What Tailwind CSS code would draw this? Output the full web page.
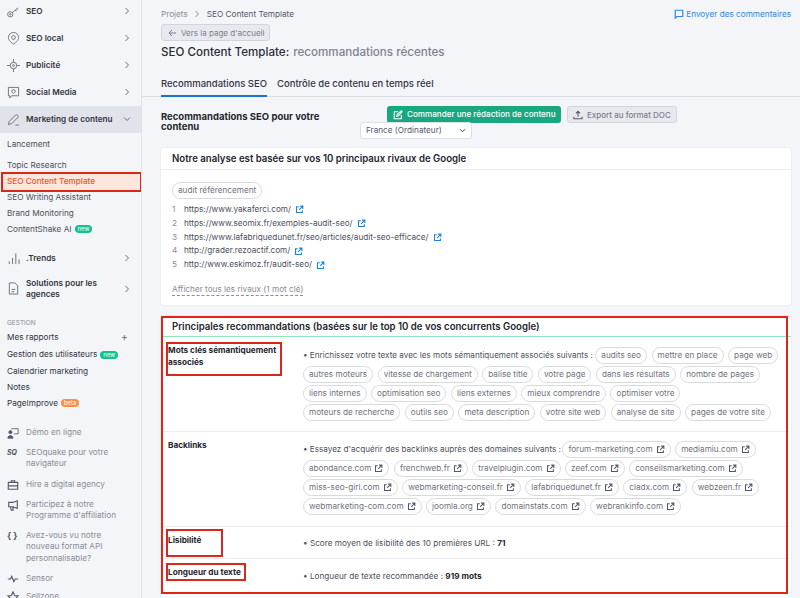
<!DOCTYPE html>
<html lang="fr"><head><meta charset="utf-8"><script src="https://cdn.jsdelivr.net/npm/@tailwindcss/browser@4"></script></head>
<body class="w-[800px] h-[598px] overflow-hidden bg-[#f4f5f9] font-['Inter',sans-serif] text-[#2b2e38]">
<svg class="hidden"><defs>
<symbol id="ext" viewBox="0 0 12 12"><path d="M5 2.200H2v7.800h7.800V7M6.800 1.500h3.700v3.700M10.200 1.800 5.500 6.500" fill="none" stroke="currentColor" stroke-width="1.400"/></symbol>
<symbol id="chev" viewBox="0 0 8 8"><path d="M2.500 1 5.500 4 2.500 7" fill="none" stroke="currentColor" stroke-width="1"/></symbol>
</defs></svg>
<div class="flex h-[598px] w-[800px] overflow-hidden">
<aside class="relative w-[142px] h-[598px] shrink-0 border-r border-[#e0e1e9] overflow-hidden flex flex-col">
 <nav class="-mt-[2.500px] flex flex-col text-[8.200px] font-semibold text-[#333642]">
  <div class="h-[27px] flex items-center pl-[7px] pr-[10px] gap-[6px]"><svg class="w-[13px] h-[13px] shrink-0 text-[#6c6e79]" viewBox="0 0 14 14" fill="none" stroke="currentColor"><circle cx="3.500" cy="10" r="2.800"/><circle cx="3.500" cy="10" r=".8"/><path d="M6 8 12 3M9 5.500l1.500 1.500M11 4l1 1"/></svg><span class="flex-1">SEO</span><svg class="w-[8px] h-[8px] text-[#6c6e79]"><use href="#chev"/></svg></div>
  <div class="h-[27px] flex items-center pl-[7px] pr-[10px] gap-[6px]"><svg class="w-[13px] h-[13px] shrink-0 text-[#6c6e79]" viewBox="0 0 14 14" fill="none" stroke="currentColor"><path d="M7 13C3 10.500 1.500 8 1.500 6a5.500 5.500 0 0 1 11 0c0 2-1.500 4.500-5.500 7Z"/><circle cx="7" cy="6" r="2"/></svg><span class="flex-1">SEO local</span><svg class="w-[8px] h-[8px] text-[#6c6e79]"><use href="#chev"/></svg></div>
  <div class="h-[27px] flex items-center pl-[7px] pr-[10px] gap-[6px]"><svg class="w-[13px] h-[13px] shrink-0 text-[#6c6e79]" viewBox="0 0 14 14" fill="none" stroke="currentColor"><circle cx="7" cy="7" r="3.500"/><circle cx="7" cy="7" r="1"/><path d="M7 0v3.500M7 10.500V14M0 7h3.500M10.500 7H14"/></svg><span class="flex-1">Publicité</span><svg class="w-[8px] h-[8px] text-[#6c6e79]"><use href="#chev"/></svg></div>
  <div class="h-[27px] flex items-center pl-[7px] pr-[10px] gap-[6px]"><svg class="w-[13px] h-[13px] shrink-0 text-[#6c6e79]" viewBox="0 0 14 14" fill="none" stroke="currentColor"><path d="M1.500 1.500h11v9H5L3 13v-2.500H1.500Z"/><path d="M5 5.500c0-2 4-2 4 0 0 1.500-2 2.500-2 2.500S5 7 5 5.500Z"/></svg><span class="flex-1">Social Media</span><svg class="w-[8px] h-[8px] text-[#6c6e79]"><use href="#chev"/></svg></div>
  <div class="h-[27px] flex items-center pl-[7px] pr-[10px] gap-[6px] bg-[#e1e3eb]"><svg class="w-[13px] h-[13px] shrink-0 text-[#6c6e79]" viewBox="0 0 14 14" fill="none" stroke="currentColor"><path d="M1.500 12.500 2.500 9 9.500 2c1-1 3.500 1.500 2.500 2.500L5 11.500ZM9 13h4"/></svg><span class="flex-1 whitespace-nowrap">Marketing de contenu</span><svg class="w-[8px] h-[8px] shrink-0 text-[#6c6e79] rotate-90"><use href="#chev"/></svg></div>
 </nav>
 <div class="flex flex-col text-[8.200px] text-[#4d505c] pl-[7px] mt-[3px]">
  <div class="h-[16px] leading-[16px] mb-[5px]">Lancement</div>
  <div class="h-[16px] leading-[16px]">Topic Research</div>
  <div class="h-[16px] leading-[16px] text-[#f0532e] font-medium -ml-[7px] pl-[7px]">SEO Content Template</div>
  <div class="h-[16px] leading-[16px]">SEO Writing Assistant</div>
  <div class="h-[16px] leading-[16px]">Brand Monitoring</div>
  <div class="h-[17px] flex items-center gap-[3px]">ContentShake AI <span class="h-[8px] px-[3px] rounded-full bg-[#10c28e] text-white text-[6px] leading-[8px]">new</span></div>
 </div>
 <div class="h-px bg-[#e0e1e9] mt-[7px]"></div>
 <div class="flex flex-col text-[8.200px] font-semibold text-[#333642]">
  <div class="h-[27px] flex items-center pl-[7px] pr-[10px] gap-[6px]"><svg class="w-[13px] h-[13px] shrink-0 text-[#6c6e79]" viewBox="0 0 14 14" fill="none" stroke="currentColor"><path d="M2.500 13v-3M6 13V6.500M9.500 13V1.500M13 13V8"/></svg><span class="flex-1">.Trends</span><svg class="w-[8px] h-[8px] text-[#6c6e79]"><use href="#chev"/></svg></div>
  <div class="h-[34px] flex items-center pl-[7px] pr-[10px] gap-[6px] leading-[11px]"><svg class="w-[13px] h-[13px] text-[#6c6e79] shrink-0" viewBox="0 0 14 14" fill="none" stroke="currentColor"><path d="M2.500 1h6l3 3v9h-9ZM5 8h4M5 10.500h3"/></svg><span class="flex-1">Solutions pour les<br>agences</span><svg class="w-[8px] h-[8px] text-[#6c6e79] shrink-0"><use href="#chev"/></svg></div>
 </div>
 <div class="h-px bg-[#e0e1e9]"></div>
 <div class="pl-[7px] pr-[13px] flex flex-col text-[8.200px] text-[#333642]">
  <div class="text-[6.500px] text-[#8a8c97] mt-[13px] h-[9px] leading-[9px] mb-[1px]">GESTION</div>
  <div class="h-[18px] flex items-center justify-between">Mes rapports<span class="text-[11px] text-[#6c6e79]">+</span></div>
  <div class="h-[16px] flex items-center gap-[3px] whitespace-nowrap">Gestion des utilisateurs <span class="h-[8px] px-[3px] rounded-full bg-[#10c28e] text-white text-[6px] leading-[8px]">new</span></div>
  <div class="h-[16px] leading-[16px]">Calendrier marketing</div>
  <div class="h-[16px] leading-[16px]">Notes</div>
  <div class="h-[17px] flex items-center gap-[3px]">PageImprove <span class="h-[8px] px-[3px] rounded-full bg-[#ff8c43] text-white text-[6px] leading-[8px]">beta</span></div>
 </div>
 <div class="h-px bg-[#e0e1e9] mt-[5px]"></div>
 <div class="flex flex-col text-[8.200px] text-[#8a8c97] leading-[11.500px] pl-[7px] pr-[8px] mt-[10px]">
  <div class="flex gap-[7px] min-h-[20px]"><svg class="w-[12px] h-[12px] text-[#55586a] shrink-0" viewBox="0 0 14 14" fill="none" stroke="currentColor"><path d="M5 2h8v6H8"/><circle cx="4" cy="6" r="1.800" fill="currentColor"/><path d="M1 13c0-4 6-4 6 0Z" fill="currentColor"/></svg><span>Démo en ligne</span></div>
  <div class="flex gap-[7px] min-h-[32px]"><span class="w-[12px] shrink-0 text-[7px] font-bold italic text-[#55586a]">SQ</span><span>SEOquake pour votre<br>navigateur</span></div>
  <div class="flex gap-[7px] min-h-[20px]"><svg class="w-[12px] h-[12px] text-[#55586a] shrink-0" viewBox="0 0 14 14" fill="none" stroke="currentColor" stroke-width="1.300"><path d="M1.500 4h11v8h-11ZM5 4V2h4v2M1.500 8h11"/></svg><span>Hire a digital agency</span></div>
  <div class="flex gap-[7px] min-h-[31px]"><svg class="w-[12px] h-[12px] text-[#55586a] shrink-0" viewBox="0 0 14 14" fill="none" stroke="currentColor" stroke-width="1.300"><path d="M2 4h5l5-2v9L7 9H2ZM4 9l1 4h2V9"/></svg><span class="whitespace-nowrap">Participez à notre<br>Programme d'affiliation</span></div>
  <div class="flex gap-[7px] min-h-[43px]"><span class="w-[12px] shrink-0 text-[9px] font-bold text-[#55586a] whitespace-nowrap">{ }</span><span>Avez-vous vu notre<br>nouveau format API<br>personnalisable?</span></div>
  <div class="flex gap-[7px] min-h-[18px]"><svg class="w-[12px] h-[12px] text-[#55586a] shrink-0" viewBox="0 0 14 14" fill="none" stroke="currentColor" stroke-width="1.300"><path d="M1 7h3l1.500-3 2.500 6 1.500-3H13"/></svg><span>Sensor</span></div>
  <div class="flex gap-[7px]"><svg class="w-[12px] h-[12px] text-[#55586a] shrink-0" viewBox="0 0 14 14" fill="none" stroke="currentColor" stroke-width="1.300"><path d="M7 1 9 5.500h4L10 9l1 4-4-2-4 2 1-4-3-3.500h4Z"/></svg><span>Sellzone</span></div>
 </div>
 <div class="absolute left-[1px] top-[172px] w-[141px] h-[20px] border-2 border-[#d8281e] bg-[#fde6dc] -z-10"></div>
</aside>
<main class="flex-1 min-w-0 relative">
 <div class="pl-[19px] pr-[9px]">
  <div class="flex items-center justify-between h-[28px]">
   <div class="flex items-center text-[8.200px] text-[#8a8c97]">Projets<svg class="w-[8px] h-[8px] mx-[5.500px] text-[#8a8c97]"><use href="#chev"/></svg><span class="text-[#55586a]">SEO Content Template</span></div>
   <div class="flex items-center gap-[2px] text-[8.200px] text-[#2e86de]"><svg class="w-[10px] h-[10px]" viewBox="0 0 12 12" fill="none" stroke="currentColor" stroke-width="1.400"><path d="M1.500 1.500h9v7.500H3.500L1.500 11Z"/></svg>Envoyer des commentaires</div>
  </div>
  <div class="-mt-[4px] h-[17px] w-[109px] flex items-center gap-[5px] px-[6px] whitespace-nowrap rounded-[3px] border border-[#d3d5de] bg-[#e8e9ef] text-[8px] text-[#7b7d89]"><svg class="w-[8px] h-[8px] shrink-0" viewBox="0 0 8 8" fill="none" stroke="currentColor"><path d="M8 4H1M4 1 1 4l3 3"/></svg>Vers la page d'accueil</div>
  <div class="mt-[1px] text-[11.600px] leading-[20px] font-medium"><span class="text-[#2b2e38]">SEO Content Template:</span> <span class="text-[#80828e] ml-[1px]">recommandations récentes</span></div>
 </div>
 <div class="mt-[10px] h-[25px] border-b border-[#dcdee6] pl-[19px] flex gap-[10px] text-[9.500px] font-medium text-[#333642]">
  <div class="h-[25px] leading-[24px] border-b-2 border-[#1c6fd0] -mb-px">Recommandations SEO</div>
  <div class="leading-[24px]">Contrôle de contenu en temps réel</div>
 </div>
 <div class="h-[51px] relative pl-[19px]">
  <div class="pt-[15px] w-[180px] text-[9.500px] leading-[10px] font-bold text-[#24262e]">Recommandations SEO pour votre contenu</div>
  <div class="absolute left-[245px] top-[9px] flex items-center gap-[6px]">
   <div class="h-[17px] w-[174px] px-[6px] flex items-center gap-[4px] rounded-[3px] bg-[#18a77f] text-white text-[8.100px] font-medium whitespace-nowrap"><svg class="w-[10px] h-[10px] shrink-0" viewBox="0 0 12 12" fill="none" stroke="currentColor" stroke-width="1.300"><path d="M6 2H1.500v8.500H10V6M4.500 7.500l.5-2L10 1l1 1-4.500 5Z"/></svg>Commander une rédaction de contenu</div>
   <div class="h-[17px] w-[110px] px-[5px] flex items-center gap-[4px] rounded-[3px] border border-[#d3d5de] bg-[#e8e9ef] text-[#7b7d89] text-[8px] font-medium whitespace-nowrap"><svg class="w-[10px] h-[10px] shrink-0 text-[#55586a]" viewBox="0 0 12 12" fill="none" stroke="currentColor" stroke-width="1.300"><path d="M6 8V1.500M3.500 4 6 1.500 8.500 4M1 8v2.500h10V8"/></svg>Export au format DOC</div>
  </div>
  <div class="absolute left-[218px] top-[25px] w-[112px] h-[17px] px-[5px] flex items-center justify-between rounded-[3px] border border-[#dcdee6] bg-white text-[8.200px] text-[#55586a]">France (Ordinateur)<svg class="w-[7px] h-[7px] text-[#24262e] rotate-90"><use href="#chev"/></svg></div>
 </div>
 <section class="ml-[19px] w-[630px] h-[157px] rounded-[3px] bg-white shadow-[0_0_2px_rgba(30,35,60,.12)]">
  <div class="h-[22px] border-b border-[#ebecf1] pl-[11px] text-[9.650px] leading-[22px] font-semibold text-[#24262e]">Notre analyse est basée sur vos 10 principaux rivaux de Google</div>
  <div class="pl-[11px] pt-[12px]">
   <div class="w-fit h-[17px] px-[5px] rounded-full border border-[#d8dae2] text-[8.200px] leading-[15px] text-[#6f717d]">audit référencement</div>
   <div class="mt-[4px] h-[74px] overflow-hidden text-[8.200px] leading-[13.800px] text-[#4d505c]">
    <div class="flex items-center"><span class="w-[12px] text-[#8a8c97]">1</span>https://www.yakaferci.com/<svg class="w-[9px] h-[9px] ml-[4px] text-[#1c7ed6]"><use href="#ext"/></svg></div>
    <div class="flex items-center"><span class="w-[12px] text-[#8a8c97]">2</span>https://www.seomix.fr/exemples-audit-seo/<svg class="w-[9px] h-[9px] ml-[4px] text-[#1c7ed6]"><use href="#ext"/></svg></div>
    <div class="flex items-center"><span class="w-[12px] text-[#8a8c97]">3</span>https://www.lafabriquedunet.fr/seo/articles/audit-seo-efficace/<svg class="w-[9px] h-[9px] ml-[4px] text-[#1c7ed6]"><use href="#ext"/></svg></div>
    <div class="flex items-center"><span class="w-[12px] text-[#8a8c97]">4</span>http://grader.rezoactif.com/<svg class="w-[9px] h-[9px] ml-[4px] text-[#1c7ed6]"><use href="#ext"/></svg></div>
    <div class="flex items-center"><span class="w-[12px] text-[#8a8c97]">5</span>http://www.eskimoz.fr/audit-seo/<svg class="w-[9px] h-[9px] ml-[4px] text-[#1c7ed6]"><use href="#ext"/></svg></div>
   </div>
   <div class="w-fit mt-[7px] text-[8.200px] leading-[11px] text-[#8a8c97] border-b border-dashed border-[#8a8c97]">Afficher tous les rivaux (1 mot clé)</div>
  </div>
 </section>
 <section class="relative ml-[19px] mt-[11px] w-[630px] h-[282px] rounded-[3px] bg-white shadow-[0_0_2px_rgba(30,35,60,.12)] text-[8.200px] text-[#4d505c]">
  <div class="h-[21px] border-b border-[#8fe3bf] pl-[11px] text-[9.650px] leading-[21px] font-semibold text-[#24262e]">Principales recommandations (basées sur le top 10 de vos concurrents Google)</div>
  <div class="h-[95px] flex border-b border-[#ebecf1] mx-[2px]">
   <div class="w-[140px] pl-[5px] pt-[7px] font-bold text-[#24262e] leading-[12px]">Mots clés sémantiquement<br>associés</div>
   <div class="pt-[10px] flex flex-col gap-[2px] text-[#6f717d] whitespace-nowrap">
    <div class="flex items-center gap-[4.500px] h-[17px]"><span class="text-[#4d505c] text-[8.150px] -mr-[2px]">• Enrichissez votre texte avec les mots sémantiquement associés suivants :</span><span class="h-[17px] px-[5px] rounded-full border border-[#d8dae2] leading-[15px]">audits seo</span><span class="h-[17px] px-[5px] rounded-full border border-[#d8dae2] leading-[15px]">mettre en place</span><span class="h-[17px] px-[5px] rounded-full border border-[#d8dae2] leading-[15px]">page web</span></div>
    <div class="flex gap-[4.500px]"><span class="h-[17px] px-[5px] rounded-full border border-[#d8dae2] leading-[15px]">autres moteurs</span><span class="h-[17px] px-[5px] rounded-full border border-[#d8dae2] leading-[15px]">vitesse de chargement</span><span class="h-[17px] px-[5px] rounded-full border border-[#d8dae2] leading-[15px]">balise title</span><span class="h-[17px] px-[5px] rounded-full border border-[#d8dae2] leading-[15px]">votre page</span><span class="h-[17px] px-[5px] rounded-full border border-[#d8dae2] leading-[15px]">dans les résultats</span><span class="h-[17px] px-[5px] rounded-full border border-[#d8dae2] leading-[15px]">nombre de pages</span></div>
    <div class="flex gap-[4.500px]"><span class="h-[17px] px-[5px] rounded-full border border-[#d8dae2] leading-[15px]">liens internes</span><span class="h-[17px] px-[5px] rounded-full border border-[#d8dae2] leading-[15px]">optimisation seo</span><span class="h-[17px] px-[5px] rounded-full border border-[#d8dae2] leading-[15px]">liens externes</span><span class="h-[17px] px-[5px] rounded-full border border-[#d8dae2] leading-[15px]">mieux comprendre</span><span class="h-[17px] px-[5px] rounded-full border border-[#d8dae2] leading-[15px]">optimiser votre</span></div>
    <div class="flex gap-[4.500px]"><span class="h-[17px] px-[5px] rounded-full border border-[#d8dae2] leading-[15px]">moteurs de recherche</span><span class="h-[17px] px-[5px] rounded-full border border-[#d8dae2] leading-[15px]">outils seo</span><span class="h-[17px] px-[5px] rounded-full border border-[#d8dae2] leading-[15px]">meta description</span><span class="h-[17px] px-[5px] rounded-full border border-[#d8dae2] leading-[15px]">votre site web</span><span class="h-[17px] px-[5px] rounded-full border border-[#d8dae2] leading-[15px]">analyse de site</span><span class="h-[17px] px-[5px] rounded-full border border-[#d8dae2] leading-[15px]">pages de votre site</span></div>
   </div>
  </div>
  <div class="h-[95px] flex border-b border-[#ebecf1] mx-[2px]">
   <div class="w-[140px] pl-[5px] pt-[7px] font-bold text-[#24262e] leading-[12px]">Backlinks</div>
   <div class="pt-[9px] flex flex-col gap-[2px] text-[#6f717d] whitespace-nowrap">
    <div class="flex items-center gap-[4.500px] h-[17px]"><span class="text-[#4d505c] text-[8.150px] -mr-[3px]">• Essayez d'acquérir des backlinks auprès des domaines suivants :</span><span class="flex items-center gap-[3px] h-[17px] px-[5px] rounded-full border border-[#d8dae2]">forum-marketing.com<svg class="w-[9px] h-[9px] text-[#55586a]"><use href="#ext"/></svg></span><span class="flex items-center gap-[3px] h-[17px] px-[5px] rounded-full border border-[#d8dae2]">mediamiu.com<svg class="w-[9px] h-[9px] text-[#55586a]"><use href="#ext"/></svg></span></div>
    <div class="flex gap-[4.500px]"><span class="flex items-center gap-[3px] h-[17px] px-[5px] rounded-full border border-[#d8dae2]">abondance.com<svg class="w-[9px] h-[9px] text-[#55586a]"><use href="#ext"/></svg></span><span class="flex items-center gap-[3px] h-[17px] px-[5px] rounded-full border border-[#d8dae2]">frenchweb.fr<svg class="w-[9px] h-[9px] text-[#55586a]"><use href="#ext"/></svg></span><span class="flex items-center gap-[3px] h-[17px] px-[5px] rounded-full border border-[#d8dae2]">travelplugin.com<svg class="w-[9px] h-[9px] text-[#55586a]"><use href="#ext"/></svg></span><span class="flex items-center gap-[3px] h-[17px] px-[5px] rounded-full border border-[#d8dae2]">zeef.com<svg class="w-[9px] h-[9px] text-[#55586a]"><use href="#ext"/></svg></span><span class="flex items-center gap-[3px] h-[17px] px-[5px] rounded-full border border-[#d8dae2]">conseilsmarketing.com<svg class="w-[9px] h-[9px] text-[#55586a]"><use href="#ext"/></svg></span></div>
    <div class="flex gap-[4.500px]"><span class="flex items-center gap-[3px] h-[17px] px-[5px] rounded-full border border-[#d8dae2]">miss-seo-girl.com<svg class="w-[9px] h-[9px] text-[#55586a]"><use href="#ext"/></svg></span><span class="flex items-center gap-[3px] h-[17px] px-[5px] rounded-full border border-[#d8dae2]">webmarketing-conseil.fr<svg class="w-[9px] h-[9px] text-[#55586a]"><use href="#ext"/></svg></span><span class="flex items-center gap-[3px] h-[17px] px-[5px] rounded-full border border-[#d8dae2]">lafabriquedunet.fr<svg class="w-[9px] h-[9px] text-[#55586a]"><use href="#ext"/></svg></span><span class="flex items-center gap-[3px] h-[17px] px-[5px] rounded-full border border-[#d8dae2]">cladx.com<svg class="w-[9px] h-[9px] text-[#55586a]"><use href="#ext"/></svg></span><span class="flex items-center gap-[3px] h-[17px] px-[5px] rounded-full border border-[#d8dae2]">webzeen.fr<svg class="w-[9px] h-[9px] text-[#55586a]"><use href="#ext"/></svg></span></div>
    <div class="flex gap-[4.500px]"><span class="flex items-center gap-[3px] h-[17px] px-[5px] rounded-full border border-[#d8dae2]">webmarketing-com.com<svg class="w-[9px] h-[9px] text-[#55586a]"><use href="#ext"/></svg></span><span class="flex items-center gap-[3px] h-[17px] px-[5px] rounded-full border border-[#d8dae2]">joomla.org<svg class="w-[9px] h-[9px] text-[#55586a]"><use href="#ext"/></svg></span><span class="flex items-center gap-[3px] h-[17px] px-[5px] rounded-full border border-[#d8dae2]">domainstats.com<svg class="w-[9px] h-[9px] text-[#55586a]"><use href="#ext"/></svg></span><span class="flex items-center gap-[3px] h-[17px] px-[5px] rounded-full border border-[#d8dae2]">webrankinfo.com<svg class="w-[9px] h-[9px] text-[#55586a]"><use href="#ext"/></svg></span></div>
   </div>
  </div>
  <div class="h-[32px] flex border-b border-[#ebecf1] mx-[2px]">
   <div class="w-[140px] pl-[5px] pt-[7px] font-bold text-[#24262e] leading-[12px]">Lisibilité</div>
   <div class="pt-[10px] leading-[12px]">• Score moyen de lisibilité des 10 premières URL : <b class="text-[#24262e]">71</b></div>
  </div>
  <div class="h-[34px] flex mx-[2px]">
   <div class="w-[140px] pl-[5px] pt-[7px] font-bold text-[#24262e] leading-[12px]">Longueur du texte</div>
   <div class="pt-[11px] leading-[12px]">• Longueur de texte recommandée : <b class="text-[#24262e]">919 mots</b></div>
  </div>
  <div class="absolute left-0 top-0 w-[627px] h-[278px] border-2 border-[#e2231a] pointer-events-none"></div>
  <div class="absolute left-[5px] top-[26px] w-[116px] h-[34px] border-2 border-[#d8281e]"></div>
  <div class="absolute left-[5px] top-[213px] w-[57px] h-[28px] border-2 border-[#d8281e]"></div>
  <div class="absolute left-[5px] top-[247px] w-[80px] h-[18px] border-2 border-[#d8281e]"></div>
 </section>
</main>
</div>
</body></html>
